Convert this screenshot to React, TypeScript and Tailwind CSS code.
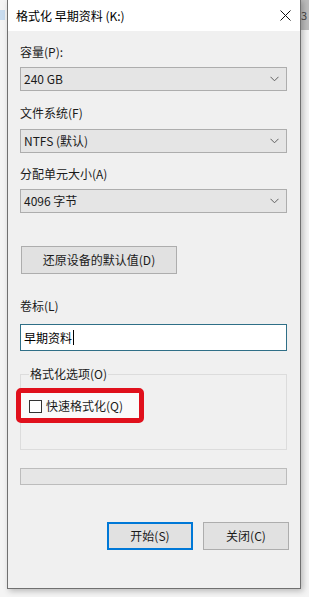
import React from 'react'

const font = { fontFamily: '"Noto Sans CJK SC", "Noto Sans", sans-serif' }

function Chevron() {
  return (
    <svg width="9" height="6" viewBox="0 0 9 6" className="text-[#606060]">
      <path d="M0.5 0.8 L4.5 4.8 L8.5 0.8" fill="none" stroke="currentColor" strokeWidth="1" />
    </svg>
  )
}

function Select({ value }: { value: string }) {
  return (
    <div className="h-[24px] w-[267px] bg-[#e5e5e5] border border-[#adadad] flex items-center justify-between pl-[3px] pr-[7px] text-[12px] text-[#1a1a1a]">
      <span>{value}</span>
      <Chevron />
    </div>
  )
}

function Label({ text, className }: { text: string; className: string }) {
  return <div className={`text-[12px] leading-[16px] text-[#1a1a1a] ${className}`}>{text}</div>
}

export default function App() {
  return (
    <div className="w-[309px] h-[597px] bg-[#f4f4f4] relative overflow-hidden" style={font}>
      {/* background bits behind the dialog */}
      <div className="absolute left-0 top-[10px] w-[5px] h-[10px] bg-[#c9dcef]" />
      <div className="absolute right-0 top-0 w-[9px] h-[30px] bg-[#bcbcbc] text-[11px] text-[#444] leading-[30px] pl-[1px]">3</div>

      <div className="absolute left-[7px] top-[-1px] w-[294px] h-[590px] border border-[#707070] bg-[#f0f0f0] shadow-[2px_2px_6px_rgba(0,0,0,0.25)] flex flex-col">
        {/* title bar */}
        <div className="h-[31px] bg-white flex items-center justify-between pl-[8px] pr-[9px] shrink-0">
          <span className="text-[12px] text-black">格式化 早期资料 (K:)</span>
          <svg width="11" height="11" viewBox="0 0 11 11">
            <path d="M0.5 0.5 L10.5 10.5 M10.5 0.5 L0.5 10.5" stroke="#111" strokeWidth="1" />
          </svg>
        </div>

        <div className="pl-[12px] flex flex-col">
          <Label text="容量(P):" className="mt-[13px]" />
          <div className="mt-[7px]">
            <Select value="240 GB" />
          </div>

          <Label text="文件系统(F)" className="mt-[14px]" />
          <div className="mt-[8px]">
            <Select value="NTFS (默认)" />
          </div>

          <Label text="分配单元大小(A)" className="mt-[13px]" />
          <div className="mt-[7px]">
            <Select value="4096 字节" />
          </div>

          <button className="mt-[33px] ml-[1px] w-[156px] h-[28px] bg-[#e1e1e1] border border-[#adadad] text-[12px] text-[#1a1a1a]">
            还原设备的默认值(D)
          </button>

          <Label text="卷标(L)" className="mt-[24px]" />
          <div className="mt-[10px] w-[267px] h-[27px] bg-white border border-[#2f6f87] flex items-center pl-[3px] text-[12px] text-black">
            早期资料<span className="w-px h-[15px] bg-black ml-px" />
          </div>

          {/* group box */}
          <div className="mt-[23px] w-[267px] h-[76px] border border-[#dcdcdc] relative">
            <span className="absolute left-[8px] top-[-9px] bg-[#f0f0f0] px-px text-[12px] leading-[16px] text-[#1a1a1a]">
              格式化选项(O)
            </span>
            <div className="absolute left-[-5px] top-[13px] w-[128px] h-[35px] border-[5px] border-[#e0101c] rounded-[5px] bg-[#fafafa]" />
            <div className="relative flex items-center mt-[23px] ml-[8px]">
              <div className="w-[13px] h-[13px] bg-white border border-[#333]" />
              <span className="ml-[4px] text-[12px] leading-[16px] text-[#1a1a1a]">快速格式化(Q)</span>
            </div>
          </div>

          <div className="mt-[18px] w-[267px] h-[17px] bg-[#e6e6e6] border border-[#bcbcbc]" />

          <div className="mt-[37px] flex gap-[10px] ml-[87px]">
            <button className="w-[86px] h-[28px] bg-[#e1e1e1] border-2 border-[#0078d7] text-[12px] text-[#1a1a1a]">
              开始(S)
            </button>
            <button className="w-[86px] h-[28px] bg-[#e1e1e1] border border-[#adadad] text-[12px] text-[#1a1a1a]">
              关闭(C)
            </button>
          </div>
        </div>
      </div>
    </div>
  )
}
